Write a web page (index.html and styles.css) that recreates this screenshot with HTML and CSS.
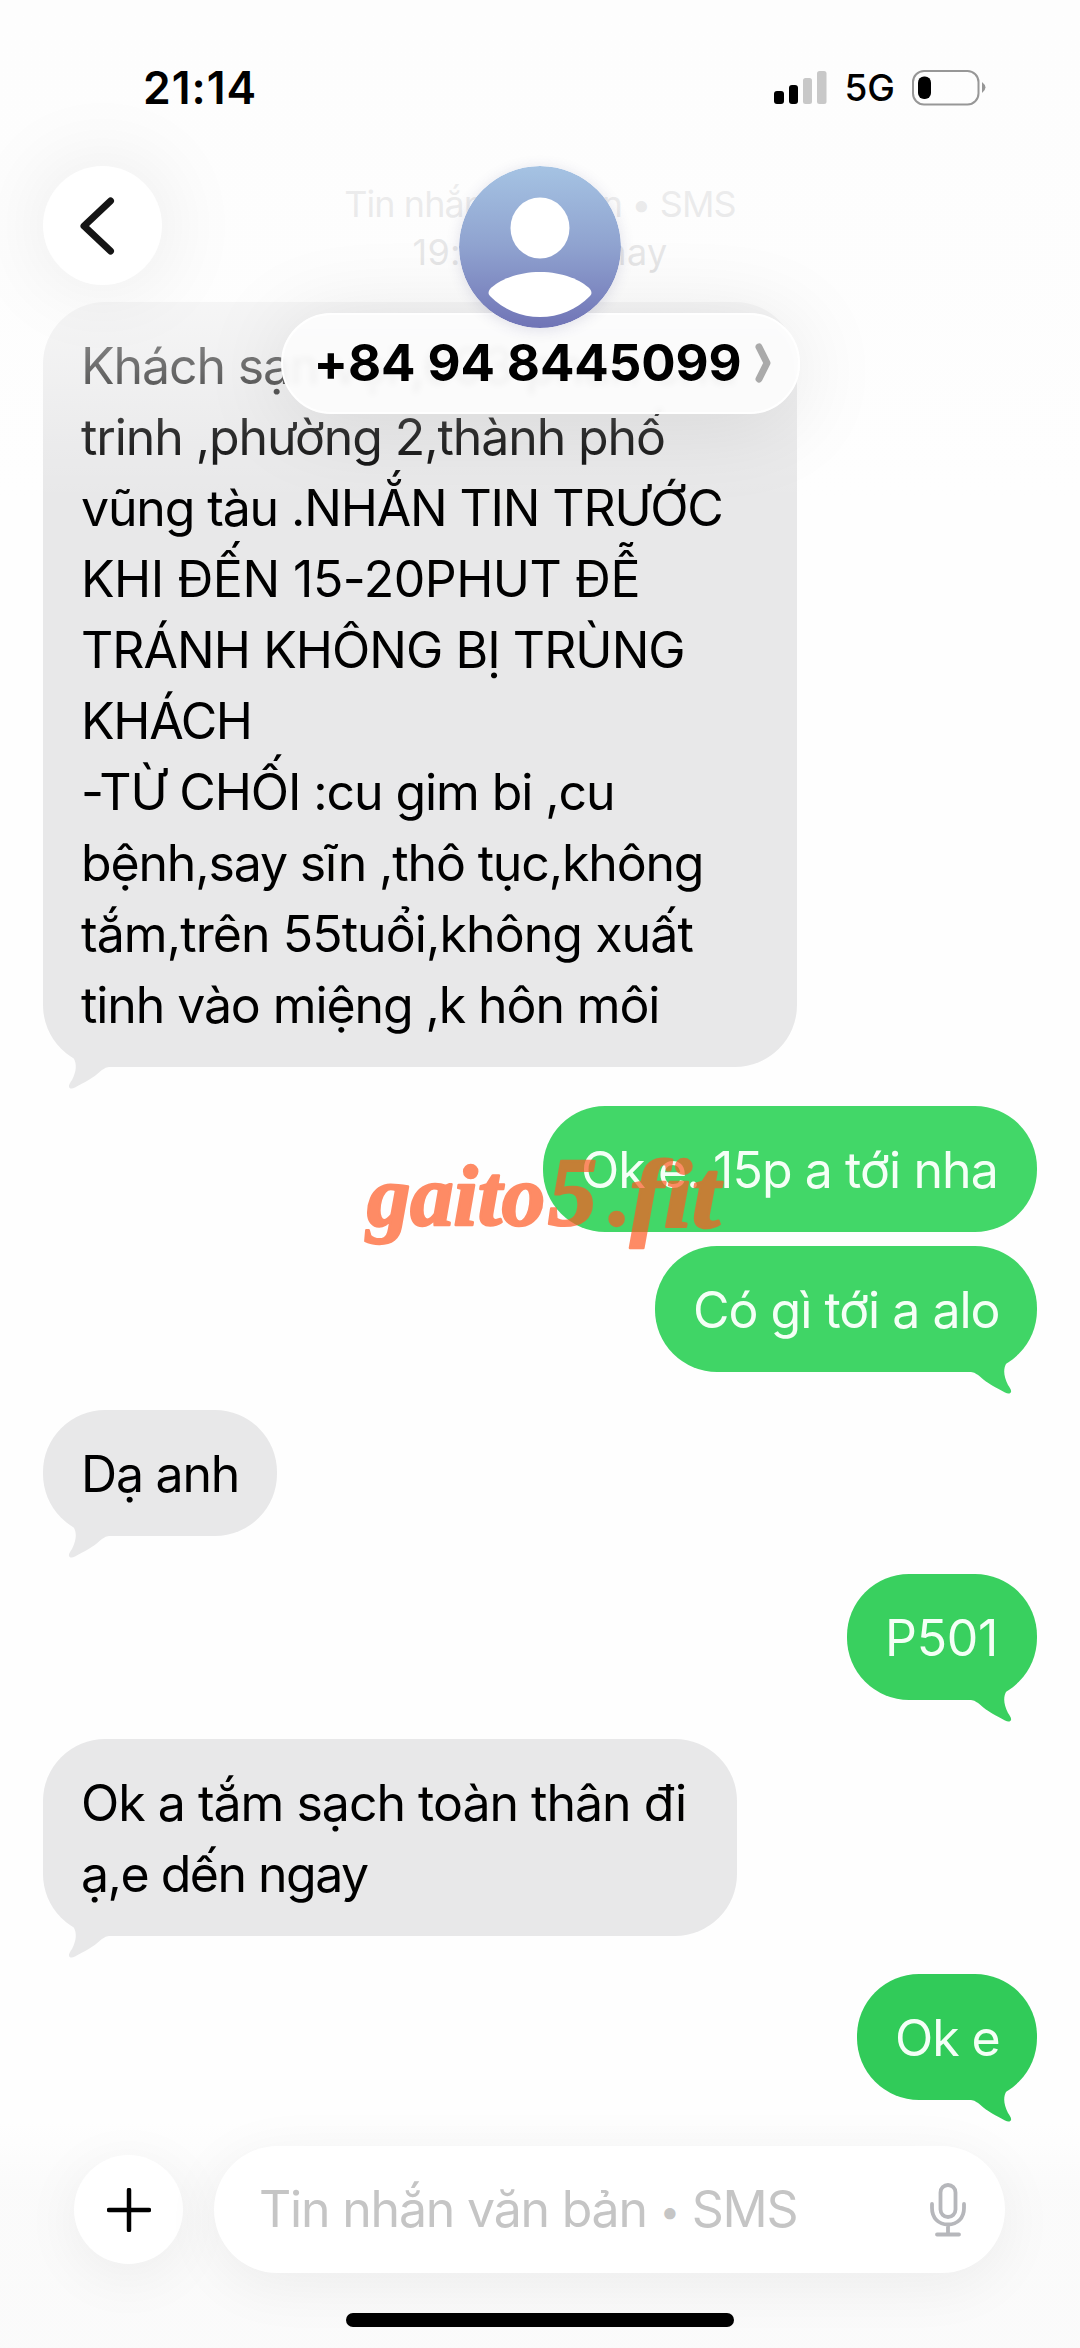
FILE: index.html
```html
<!DOCTYPE html>
<html lang="vi">
<head>
<meta charset="utf-8">
<title>Tin nhắn</title>
<link rel="stylesheet" href="styles.css">
</head>
<body>
<div class="phone">
  <svg class="defs" width="0" height="0"><symbol id="tail" viewBox="0 0 60 60"><path d="M0 0C8 12 15 16 20.500 21C24 27 23.500 34 19 43C17 46 15.500 48 16 50C17 52 19 52 22 50.500C32 45 38 42 43 38C49 33 52 29.500 60 29.500V0Z"/></symbol></svg>
  <main class="thread">
    <div class="stamp"><span class="stamp-service">Tin nhắn văn bản • SMS</span><span class="stamp-time">19:27 Hôm nay</span></div>
    <div class="bubble in tail-in">
      <span class="l1">Khách sạn vọi ,603 phan chu</span>
      <span class="l2">trinh ,phường 2,thành phố</span>
      <span class="l3">vũng tàu .NHẮN TIN TRƯỚC</span>
      <span class="l4">KHI ĐẾN 15-20PHUT ĐỄ</span>
      <span class="l5">TRÁNH KHÔNG BỊ TRÙNG</span>
      <span class="l6">KHÁCH</span>
      <span class="l7">-TỪ CHỐI :cu gim bi ,cu</span>
      <span class="l8">bệnh,say sĩn ,thô tục,không</span>
      <span class="l9">tắm,trên 55tuổi,không xuất</span>
      <span class="l10">tinh vào miệng ,k hôn môi</span>
      <svg class="tail"><use href="#tail"/></svg>
    </div>
    <div class="bubble out w1 follow"><span class="m1">Ok e. 15p a tới nha</span></div>
    <div class="bubble out w2">
      <span class="m2">Có gì tới a alo</span>
      <svg class="tail"><use href="#tail"/></svg>
    </div>
    <div class="bubble in w3">
      <span class="m3">Dạ anh</span>
      <svg class="tail"><use href="#tail"/></svg>
    </div>
    <div class="bubble out w4">
      <span class="m4">P501</span>
      <svg class="tail"><use href="#tail"/></svg>
    </div>
    <div class="bubble in w5">
      <span class="m5">Ok a tắm sạch toàn thân đi</span>
      <span class="m6">ạ,e dến ngay</span>
      <svg class="tail"><use href="#tail"/></svg>
    </div>
    <div class="bubble out w6">
      <span class="m7">Ok e</span>
      <svg class="tail"><use href="#tail"/></svg>
    </div>
  </main>

  <header class="top">
    <div class="status">
      <span class="clock">21:14</span>
      <div class="status-right">
        <svg width="53" height="34" viewBox="0 0 53 34"><rect x="0" y="20" width="10" height="13" rx="3"/><rect x="15" y="14" width="9" height="19" rx="3"/><g fill="#c8c8c8"><rect x="29" y="7" width="9" height="26" rx="2.5"/><rect x="43" y="0" width="9.500" height="33" rx="2.500"/></g></svg>
        <span class="net">5G</span>
        <svg width="75" height="36" viewBox="0 0 75 36"><rect x="1" y="1" width="65.500" height="33.500" rx="11" fill="none" stroke="#979797" stroke-width="2"/><rect x="6" y="6.500" width="13" height="22.500" rx="6"/><path d="M70 12Q77 17.500 70 23Z" fill="#979797"/></svg>
      </div>
    </div>
    <div class="back"><svg width="60" height="60" viewBox="0 0 60 60"><path d="M37.500 5L11 30L37.500 55" fill="none" stroke="#151515" stroke-width="7" stroke-linecap="round" stroke-linejoin="round"/></svg></div>
    <div class="contact">
      <svg class="avatar" width="162" height="162" viewBox="0 0 162 162">
        <defs><linearGradient id="av" x1="0" y1="0" x2="0" y2="1"><stop offset="0" stop-color="#a5c3e3"/><stop offset=".5" stop-color="#8fa2cf"/><stop offset="1" stop-color="#7074b6"/></linearGradient></defs>
        <circle cx="81" cy="81" r="81" fill="url(#av)"/>
        <ellipse cx="81" cy="62" rx="29.500" ry="30.500" fill="#fff"/>
        <path d="M81 106C104 106 122 114 131 123C133 126 133 128 131 130C117 144 100 151 81 151C62 151 45 144 31 130C29 128 29 126 31 123C40 114 58 106 81 106Z" fill="#fff"/>
      </svg>
      <div class="pill"><span class="number">+84 94 8445099</span><svg width="18" height="42" viewBox="0 0 18 42"><path d="M4 5L12 21L4 37" fill="none" stroke="#aaa" stroke-width="7" stroke-linecap="round" stroke-linejoin="round"/></svg></div>
    </div>
  </header>

  <footer class="bottom">
    <div class="composer">
      <div class="plus"><svg width="44" height="44" viewBox="0 0 44 44"><path d="M22 2V42M2 22H42" stroke="#000" stroke-width="4.500" stroke-linecap="round"/></svg></div>
      <div class="field"><span class="placeholder">Tin nhắn văn bản <span class="dot">•</span> SMS</span>
        <svg width="38" height="54" viewBox="0 0 38 54"><g fill="none" stroke="#b6b7bb" stroke-width="3.800" stroke-linecap="round"><rect x="11.500" y="2" width="15" height="32" rx="7.500"/><path d="M3 21V25C3 35 9.500 41.500 19 41.500S35 35 35 25V21M19 42V51M8 51.500H30"/></g></svg>
      </div>
    </div>
    <div class="home"></div>
  </footer>
  <svg class="watermark" width="400" height="190" viewBox="0 -30 400 190"><text y="85"><tspan x="15" textLength="178" lengthAdjust="spacingAndGlyphs">gaito</tspan><tspan class="wide" x="196">5</tspan><tspan x="257">.</tspan><tspan class="wide" x="278" y="87" textLength="90" lengthAdjust="spacingAndGlyphs">fit</tspan></text></svg>
</div>
</body>
</html>
```
FILE: styles.css
```css
* { box-sizing: border-box; }
body { margin: 0; background: #fefefe; }
.phone {
  position: relative;
  width: 1080px;
  height: 2348px;
  overflow: hidden;
  background: #fefefe;
  font-family: Inter, "Noto Sans", sans-serif;
  color: #000;
}
.defs { display: block; }

/* conversation */
.thread {
  display: flex;
  flex-direction: column;
  gap: 38.3px;
  padding: 180px 43px 0;
}
.stamp {
  display: flex;
  flex-direction: column;
  align-items: center;
  height: 84px;
  font-size: 36px;
  line-height: 48px;
  color: #8a8a8e;
}
.stamp-service { letter-spacing: -.95px; }
.stamp-time { letter-spacing: .3px; }
.bubble {
  position: relative;
  padding: 29px 38px 26px;
  border-radius: 62px;
  font-size: 50px;
  line-height: 71px;
  letter-spacing: -1.1px;
  white-space: nowrap;
}
.bubble span { display: block; width: max-content; }
.l3 { letter-spacing: -1.15px; }
.l4 { letter-spacing: -.5px; }
.l5 { letter-spacing: -.95px; }
.l6 { letter-spacing: -1.3px; }
.l8 { letter-spacing: -1.15px; }
.l9 { letter-spacing: -.92px; }
.m1 { letter-spacing: -.9px; }
.m2 { letter-spacing: -1px; }
.m3 { letter-spacing: -1.2px; }
.m4 { letter-spacing: -.3px; }
.m5 { letter-spacing: -1px; }
.m6 { letter-spacing: -1.5px; }
.in { align-self: flex-start; background: #e8e8e9; }
.out { align-self: flex-end; background: #3bd362; color: #f4fff6; }
.tail-in { width: 754px; }
.w1 { width: 494px; background: #42d768; }
.w2 { width: 382px; background: #40d566; }
.w3 { width: 234px; }
.w4 { width: 190px; background: #39d05f; }
.w5 { width: 694px; }
.w6 { width: 180px; background: #31cb59; }
.follow { margin-bottom: -24px; }
.tail {
  position: absolute;
  bottom: -30px;
  left: 10px;
  width: 60px;
  height: 60px;
  fill: #e8e8e9;
}
.out .tail { left: auto; right: 10px; transform: scaleX(-1); fill: #3bd362; }
.w2 .tail { fill: #40d566; }
.w4 .tail { fill: #39d05f; }
.w6 .tail { fill: #31cb59; }

/* header laid over the conversation */
.top {
  position: absolute;
  inset: 0 0 auto;
  height: 520px;
  background: linear-gradient(rgba(253,253,253,1) 0, rgba(253,253,253,.86) 180px, rgba(253,253,253,.8) 260px, rgba(253,253,253,.62) 310px, rgba(253,253,253,.42) 370px, rgba(253,253,253,.16) 440px, rgba(253,253,253,0) 500px);
}
.status {
  display: flex;
  justify-content: space-between;
  align-items: center;
  padding: 64px 93px 0 143px;
  height: 112px;
}
.clock { font-size: 44.5px; font-weight: 600; line-height: 48px; letter-spacing: 1px; }
.status-right { display: flex; align-items: center; gap: 17px; }
.net { font-size: 37px; font-weight: 500; line-height: 48px; }
.back {
  position: absolute;
  left: 43px;
  top: 166px;
  width: 119px;
  height: 119px;
  display: grid;
  place-items: center;
  border-radius: 50%;
  background: #fff;
  box-shadow: 0 0 90px rgba(0,0,0,.09);
}
.contact {
  display: flex;
  flex-direction: column;
  align-items: center;
  padding-top: 54px;
}
.avatar { position: relative; z-index: 1; border-radius: 50%; box-shadow: 0 2px 14px rgba(60,60,120,.15); }
.pill {
  display: flex;
  justify-content: space-between;
  align-items: center;
  width: 519px;
  height: 101px;
  margin-top: -15px;
  padding: 0 25px 1px 31px;
  border: 2px solid #fff;
  border-radius: 51px;
  background: rgba(252,252,252,.92);
  backdrop-filter: blur(3px);
  box-shadow: 0 8px 90px rgba(0,0,0,.1);
}
.number { font-size: 51px; font-weight: 700; line-height: 60px; letter-spacing: -.1px; white-space: nowrap; }

/* composer */
.bottom {
  position: absolute;
  inset: auto 0 0;
  height: 248px;
  padding: 46px 75px 0 74px;
  background: linear-gradient(rgba(250,250,250,0) 22px, rgba(250,250,250,.9) 90px);
}
.composer { display: flex; align-items: center; justify-content: space-between; }
.plus {
  display: grid;
  place-items: center;
  width: 109px;
  height: 109px;
  border-radius: 50%;
  background: #fff;
  box-shadow: 0 12px 60px rgba(0,0,0,.06);
}
.field {
  display: flex;
  align-items: center;
  justify-content: space-between;
  width: 791px;
  height: 127px;
  padding: 0 38px 0 45px;
  border-radius: 64px;
  background: #fff;
  box-shadow: 0 12px 60px rgba(0,0,0,.06);
}
.placeholder { font-size: 50px; line-height: 60px; letter-spacing: -1.2px; color: #c5c5c5; white-space: nowrap; }
.dot { font-size: 36px; vertical-align: 3px; }
.home { width: 388px; height: 14px; margin: 40px 0 0 272px; border-radius: 7px; background: #000; }

.watermark {
  position: absolute;
  left: 352px;
  top: 1110px;
  opacity: .69;
  fill: #ff5821;
  stroke: #ff5821;
  stroke-width: 2.500px;
  stroke-linejoin: round;
  font: italic bold 86px "Liberation Serif", serif;
}
.wide { font-size: 98px; }
```
